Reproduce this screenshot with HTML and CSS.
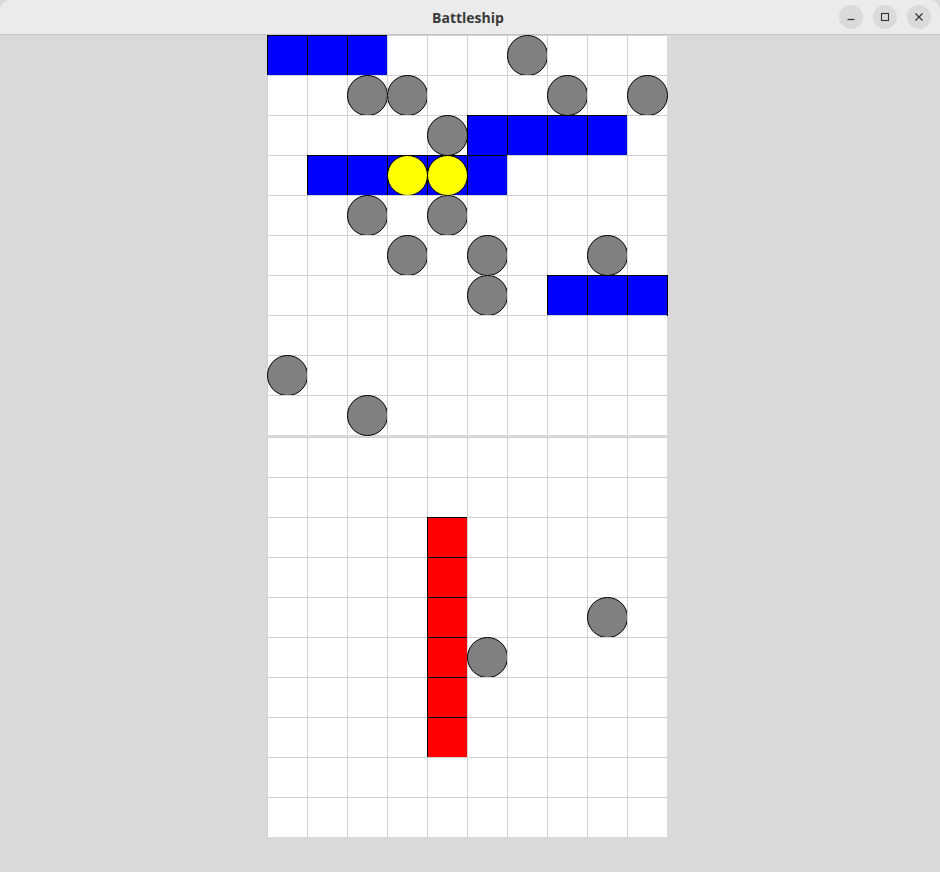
FILE: index.html
```html
<!DOCTYPE html>
<html>
<head>
<meta charset="utf-8">
<title>Battleship</title>
<link rel="stylesheet" href="styles.css">
</head>
<body>
<div class="window">
  <header class="titlebar">
    <div class="title">Battleship</div>
    <div class="controls">
      <span class="btn"><svg width="10" height="10" viewBox="0 0 10 10"><path d="M1.5 7.5h7" stroke="#333" stroke-width="1.2"/></svg></span>
      <span class="btn"><svg width="10" height="10" viewBox="0 0 10 10"><rect x="1.5" y="1.5" width="7" height="7" fill="none" stroke="#333" stroke-width="1.1"/></svg></span>
      <span class="btn"><svg width="10" height="10" viewBox="0 0 10 10"><path d="M1.5 1.5l7 7M8.5 1.5l-7 7" stroke="#333" stroke-width="1.2"/></svg></span>
    </div>
  </header>
  <main class="content">
    <div class="boards">
      <div class="board" id="top"></div>
      <div class="board" id="bottom"></div>
    </div>
  </main>
</div>
<script src="app.js"></script>
</body>
</html>
```
FILE: styles.css
```css
html, body {
  margin: 0;
  padding: 0;
  background: #d9d9d9;
}
.window {
  width: 940px;
  height: 872px;
  display: flex;
  flex-direction: column;
  background: #d9d9d9;
  overflow: hidden;
}
.titlebar {
  height: 34px;
  flex: none;
  background: #ebebeb;
  border-bottom: 1px solid #c4c4c4;
  display: flex;
  align-items: center;
  justify-content: center;
  position: relative;
  border-top-right-radius: 10px;
  border-top-left-radius: 10px;
}
.title {
  font-family: "Open Sans", "Noto Sans", sans-serif;
  font-weight: 700;
  font-size: 14px;
  color: #3a3a3a;
  margin-left: -4px;
}
.controls {
  position: absolute;
  right: 9px;
  top: 5px;
  display: flex;
  gap: 10px;
}
.btn {
  width: 24px;
  height: 24px;
  border-radius: 50%;
  background: #dadada;
  display: flex;
  align-items: center;
  justify-content: center;
}
.content {
  flex: 1;
  display: flex;
  justify-content: center;
  padding-left: 1px;
}
.boards {
  display: flex;
  flex-direction: column;
  gap: 2px;
  width: 400px;
  margin-left: -7px;
}
.board {
  display: grid;
  grid-template-columns: repeat(10, 40px);
  grid-template-rows: repeat(10, 40px);
  width: 400px;
  background: #ffffff;
}
.cell {
  box-sizing: border-box;
  border-left: 1px solid #d0d0d0;
  border-top: 1px solid #d0d0d0;
  background: #ffffff;
  position: relative;
}
.cell.ship::before {
  content: "";
  position: absolute;
  left: -1px;
  top: -1px;
  width: 41px;
  height: 41px;
  box-sizing: border-box;
  border: 1px solid #000;
  background: #0000ff;
}
.cell.red::before {
  background: #ff0000;
}
.dot {
  position: absolute;
  left: -1px;
  top: -1px;
  width: 41px;
  height: 41px;
  box-sizing: border-box;
  border: 1px solid #000;
  border-radius: 50%;
  background: #808080;
}
.dot.hit {
  background: #ffff00;
}
```
FILE: app.js
```js
function build(id, ships, misses, hits, red) {
  var b = document.getElementById(id);
  var key = function (r, c) { return r + ',' + c; };
  var shipSet = {}, missSet = {}, hitSet = {};
  ships.forEach(function (p) { shipSet[key(p[0], p[1])] = 1; });
  misses.forEach(function (p) { missSet[key(p[0], p[1])] = 1; });
  hits.forEach(function (p) { hitSet[key(p[0], p[1])] = 1; });
  for (var r = 0; r < 10; r++) {
    for (var c = 0; c < 10; c++) {
      var d = document.createElement('div');
      d.className = 'cell';
      var k = key(r, c);
      if (shipSet[k]) d.className += ' ship' + (red ? ' red' : '');
      if (missSet[k] || hitSet[k]) {
        var s = document.createElement('span');
        s.className = 'dot' + (hitSet[k] ? ' hit' : '');
        d.appendChild(s);
      }
      b.appendChild(d);
    }
  }
}
var topShips = [[0,0],[0,1],[0,2],[2,5],[2,6],[2,7],[2,8],[3,1],[3,2],[3,3],[3,4],[3,5],[6,7],[6,8],[6,9]];
var topMiss = [[0,6],[1,2],[1,3],[1,7],[1,9],[2,4],[4,2],[4,4],[5,3],[5,5],[5,8],[6,5],[8,0],[9,2]];
var topHits = [[3,3],[3,4]];
build('top', topShips, topMiss, topHits, false);
var botShips = [[2,4],[3,4],[4,4],[5,4],[6,4],[7,4]];
var botMiss = [[4,8],[5,5]];
build('bottom', botShips, botMiss, [], true);
```
